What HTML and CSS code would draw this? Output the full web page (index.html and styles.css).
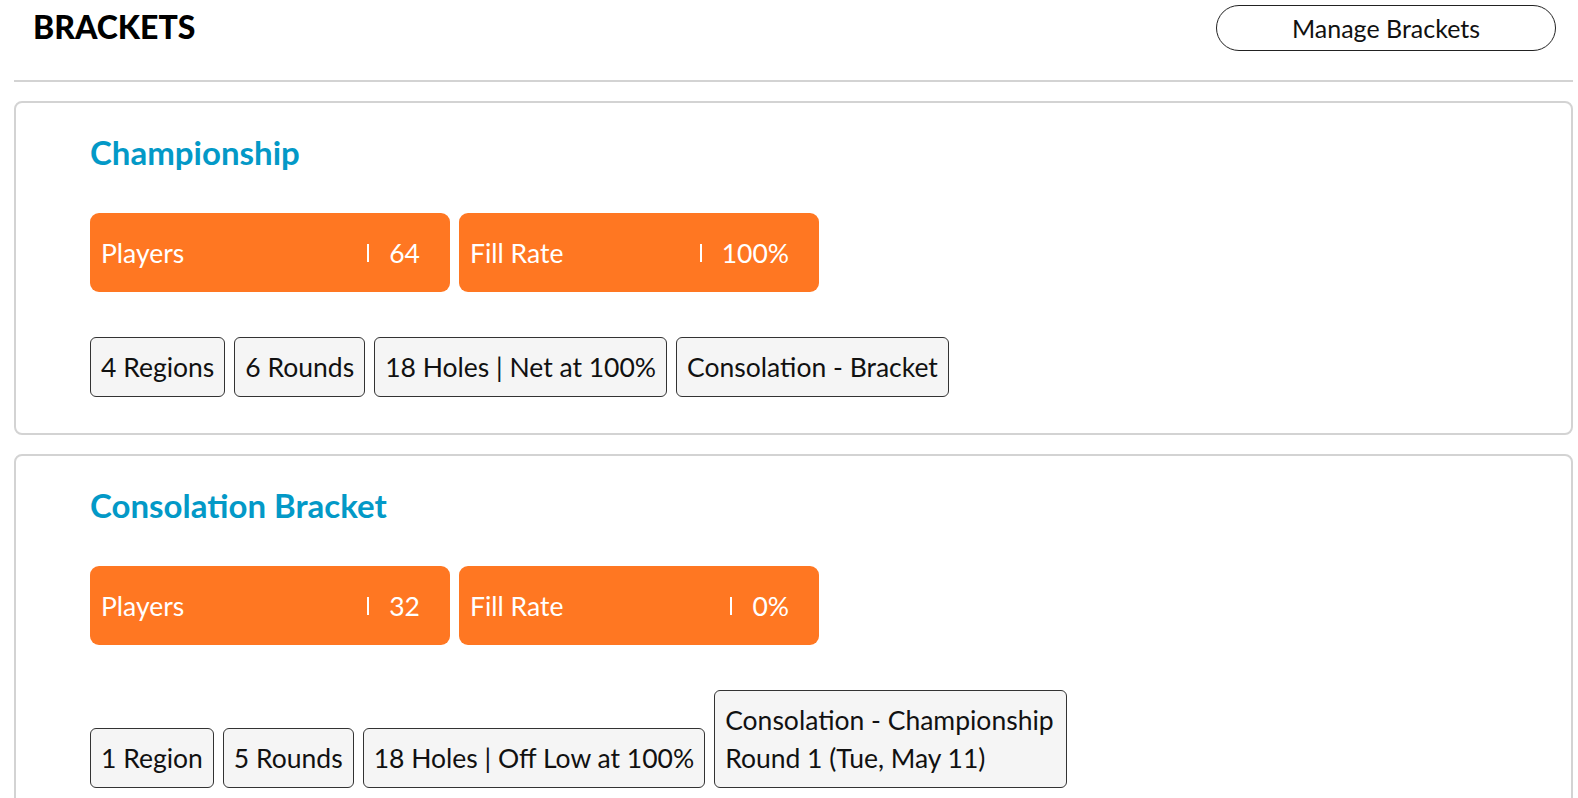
FILE: index.html
```html
<!DOCTYPE html>
<html lang="en">

<head>
    <meta charset="UTF-8">
    <meta name="viewport" content="width=device-width, initial-scale=1.0">
    <title>Brackets</title>
    <link rel="stylesheet" href="styles.css">
</head>

<body>
    <div class="page">
        <div class="header">
            <h1>BRACKETS</h1>
            <button class="manage">Manage Brackets</button>
        </div>

        <div class="card">
            <h2>Championship</h2>
            <div class="stats">
                <div class="stat"><span class="label">Players</span><span class="value">64</span></div>
                <div class="stat"><span class="label">Fill Rate</span><span class="value">100%</span></div>
            </div>
            <div class="tags">
                <div class="tag">4 Regions</div>
                <div class="tag">6 Rounds</div>
                <div class="tag">18 Holes | Net at 100%</div>
                <div class="tag">Consolation - Bracket</div>
            </div>
        </div>

        <div class="card">
            <h2>Consolation Bracket</h2>
            <div class="stats">
                <div class="stat"><span class="label">Players</span><span class="value">32</span></div>
                <div class="stat"><span class="label">Fill Rate</span><span class="value">0%</span></div>
            </div>
            <div class="tags">
                <div class="tag">1 Region</div>
                <div class="tag">5 Rounds</div>
                <div class="tag">18 Holes | Off Low at 100%</div>
                <div class="tag wide">Consolation - Championship Round 1 (Tue, May 11)</div>
            </div>
        </div>
    </div>
</body>

</html>
```

FILE: styles.css
```css
* {
    margin: 0;
    padding: 0;
    box-sizing: border-box;
}

body {
    background: #fff;
    font-family: Lato, "Noto Sans", sans-serif;
    color: #111;
}

.page {
    padding: 0 5px 0 14px;
}

.header {
    height: 82px;
    display: flex;
    justify-content: space-between;
    align-items: flex-start;
    padding: 5px 17px 0 19px;
    border-bottom: 2px solid #d3d3d3;
}

h1 {
    font-size: 32px;
    font-weight: 900;
    line-height: 44px;
    color: #000;
}

.manage {
    width: 340px;
    height: 46px;
    border: 1px solid #222;
    border-radius: 23px;
    background: #fff;
    font-family: Lato, "Noto Sans", sans-serif;
    font-size: 25px;
    color: #111;
    cursor: pointer;
}

.card {
    margin-top: 19px;
    border: 2px solid #d3d3d3;
    border-radius: 8px;
    padding: 30px 74px 36px;
}

h2 {
    font-size: 33px;
    font-weight: 700;
    line-height: 38px;
    color: #0399c7;
    margin-bottom: 42px;
}

.stats {
    display: flex;
    gap: 9px;
}

.stat {
    width: 360px;
    height: 79px;
    display: flex;
    align-items: center;
    padding: 0 30px 0 11px;
    background: #ff7722;
    border-radius: 9px;
    color: #fff;
    font-size: 26.5px;
}

.stat .label {
    flex: 1;
}

.stat .value {
    display: flex;
    align-items: center;
}

.stat .value::before {
    content: "";
    width: 2px;
    height: 18px;
    background: #fff;
    margin-right: 20px;
}

.tags {
    display: flex;
    align-items: flex-end;
    gap: 9px;
    margin-top: 45px;
}

.tag {
    border: 1px solid #333;
    border-radius: 6px;
    background: #f5f5f5;
    padding: 10px;
    font-size: 26.5px;
    line-height: 38px;
}

.tag.wide {
    max-width: 353px;
}
```
